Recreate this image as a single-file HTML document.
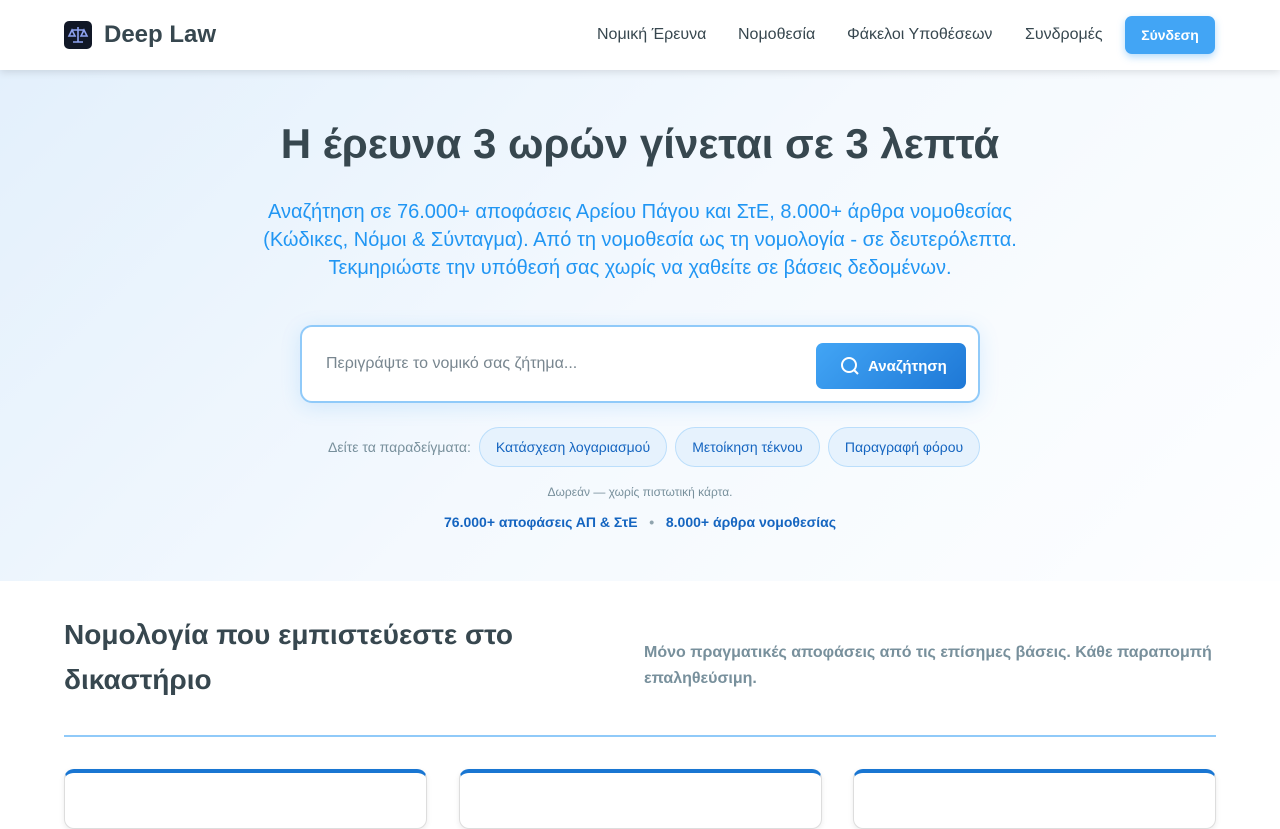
<!DOCTYPE html>
<html><head><meta charset="utf-8"><style>
*{box-sizing:border-box;margin:0;padding:0}
body{width:1280px;height:800px;overflow:hidden;font-family:"Liberation Sans",sans-serif;background:#fff;color:#37474f;position:relative}
.nav{position:absolute;top:0;left:0;width:1280px;height:70px;background:#fff;box-shadow:0 2px 8px rgba(0,0,0,.12);z-index:2}
.logo{position:absolute;left:64px;top:21px;width:28px;height:28px;background:#111827;border-radius:5px}
.brand{position:absolute;left:104px;top:21px;font-size:24px;font-weight:bold;color:#37474f}
.links a{position:absolute;top:26px;font-size:16px;color:#37474f;text-decoration:none}
.btn{position:absolute;left:1125px;top:16px;width:90px;height:38px;background:#42a5f5;color:#fff;font-weight:bold;font-size:14px;border-radius:7px;text-align:center;line-height:38px;box-shadow:0 3px 8px rgba(66,165,245,.4)}
.hero{position:absolute;top:70px;left:0;width:1280px;height:511px;background:linear-gradient(135deg,#e3f0fc 0%,#f4f9fe 50%,#fdfeff 100%)}
h1{position:absolute;top:120px;width:1280px;text-align:center;font-size:42px;font-weight:bold;color:#37474f}
.sub{position:absolute;top:198px;width:1280px;text-align:center;font-size:20px;line-height:28px;color:#2196f3}
.search{position:absolute;left:300px;top:325px;width:680px;height:78px;background:#fff;border:2px solid #90caf9;border-radius:12px;box-shadow:0 4px 20px rgba(33,150,243,.15)}
.search span{position:absolute;left:24px;top:28px;font-size:16px;color:#78868f}
.sbtn{position:absolute;left:514px;top:16px;width:150px;height:46px;border-radius:7px;background:linear-gradient(135deg,#42a5f5,#1e78d6);color:#fff;font-weight:bold;font-size:15px}
.sbtn svg{position:absolute;left:24px;top:13px}
.sbtn b{position:absolute;left:52px;top:15px}
.ex{position:absolute;top:427px;height:40px;border:1px solid #bbdefb;background:#e6f2fd;border-radius:20px;font-size:14px;color:#1565c0;line-height:38px;text-align:center}
.small{position:absolute;left:0;width:1280px;text-align:center}
h2{position:absolute;left:64px;top:612px;font-size:28px;line-height:45px;font-weight:bold;color:#37474f;width:500px}
.p{position:absolute;left:644px;top:640px;font-size:16px;line-height:26px;font-weight:bold;color:#78909c;width:580px}
.line{position:absolute;left:64px;top:735px;width:1152px;height:2px;background:#90caf9}
.card{position:absolute;top:769px;width:363px;height:60px;border:1px solid #ddd;border-top:4px solid #1976d2;border-radius:10px;background:#fff;box-shadow:0 2px 6px rgba(0,0,0,.08)}
</style></head><body>
<div class="hero"></div>
<div class="nav">
<div class="logo"><svg width="28" height="28" viewBox="0 0 28 28" fill="none" stroke="#8ea2f0" stroke-width="1.6"><path d="M14 6v15M8 9h12M9 21h10M8 9l-3 6h6zM20 9l-3 6h6z"/></svg></div>
<div class="brand">Deep Law</div>
<div class="links"><a style="left:597px">Νομική Έρευνα</a><a style="left:738px">Νομοθεσία</a><a style="left:847px">Φάκελοι Υποθέσεων</a><a style="left:1025px">Συνδρομές</a></div>
<div class="btn">Σύνδεση</div>
</div>
<h1>Η έρευνα 3 ωρών γίνεται σε 3 λεπτά</h1>
<div class="sub">Αναζήτηση σε 76.000+ αποφάσεις Αρείου Πάγου και ΣτΕ, 8.000+ άρθρα νομοθεσίας<br>(Κώδικες, Νόμοι &amp; Σύνταγμα). Από τη νομοθεσία ως τη νομολογία - σε δευτερόλεπτα.<br>Τεκμηριώστε την υπόθεσή σας χωρίς να χαθείτε σε βάσεις δεδομένων.</div>
<div class="search"><span>Περιγράψτε το νομικό σας ζήτημα...</span>
<div class="sbtn"><svg width="20" height="20" viewBox="0 0 20 20" fill="none" stroke="#fff" stroke-width="2"><circle cx="9" cy="9" r="7"/><path d="M14 14l4 4"/></svg><b>Αναζήτηση</b></div></div>
<div style="position:absolute;left:328px;top:439px;font-size:14px;color:#78909c">Δείτε τα παραδείγματα:</div>
<div class="ex" style="left:479px;width:188px">Κατάσχεση λογαριασμού</div>
<div class="ex" style="left:675px;width:145px">Μετοίκηση τέκνου</div>
<div class="ex" style="left:828px;width:152px">Παραγραφή φόρου</div>
<div class="small" style="top:485px;font-size:12px;color:#78909c">Δωρεάν — χωρίς πιστωτική κάρτα.</div>
<div class="small" style="top:514px;font-size:14px;font-weight:bold;color:#1565c0">76.000+ αποφάσεις ΑΠ &amp; ΣτΕ &nbsp; <span style="color:#90a4ae">•</span> &nbsp; 8.000+ άρθρα νομοθεσίας</div>
<h2>Νομολογία που εμπιστεύεστε στο δικαστήριο</h2>
<div class="p">Μόνο πραγματικές αποφάσεις από τις επίσημες βάσεις. Κάθε παραπομπή επαληθεύσιμη.</div>
<div class="line"></div>
<div class="card" style="left:64px"></div>
<div class="card" style="left:459px"></div>
<div class="card" style="left:853px"></div>
</body></html>
